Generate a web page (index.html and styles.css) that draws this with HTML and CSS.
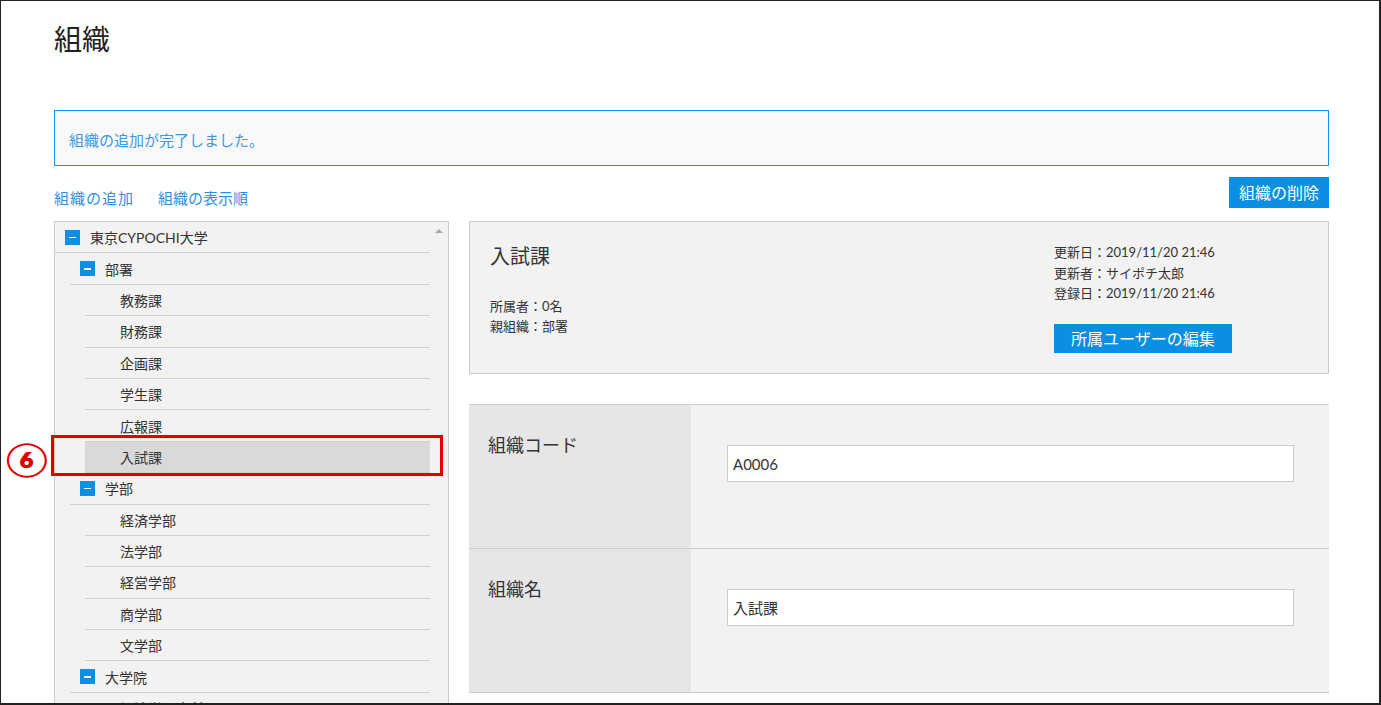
FILE: index.html
```html
<!DOCTYPE html>
<html lang="ja">
<head>
<meta charset="utf-8">
<title>組織</title>
<link rel="stylesheet" href="styles.css">
</head>
<body>
<div class="frame">
  <h1 class="page-title">組織</h1>

  <div class="alert">組織の追加が完了しました。</div>

  <div class="toolbar">
    <div class="links">
      <a class="link">組織の追加</a>
      <a class="link link-second">組織の表示順</a>
    </div>
    <button class="btn btn-delete">組織の削除</button>
  </div>

  <div class="main">
    <div class="tree">
      <div class="tree-list">
        <div class="row lv0"><span class="toggle"></span>東京CYPOCHI大学</div>
        <div class="row lv1"><span class="toggle"></span>部署</div>
        <div class="row lv2 leaf">教務課</div>
        <div class="row lv2 leaf">財務課</div>
        <div class="row lv2 leaf">企画課</div>
        <div class="row lv2 leaf">学生課</div>
        <div class="row lv2 leaf">広報課</div>
        <div class="row lv2 leaf selected">入試課</div>
        <div class="row lv1"><span class="toggle"></span>学部</div>
        <div class="row lv2 leaf">経済学部</div>
        <div class="row lv2 leaf">法学部</div>
        <div class="row lv2 leaf">経営学部</div>
        <div class="row lv2 leaf">商学部</div>
        <div class="row lv2 leaf">文学部</div>
        <div class="row lv1"><span class="toggle"></span>大学院</div>
        <div class="row lv2 leaf">経済学研究科</div>
      </div>
      <div class="tree-scrollbar"><span class="scroll-up"></span></div>
    </div>

    <div class="detail">
      <div class="info">
        <div class="info-left">
          <div class="info-name">入試課</div>
          <div class="info-meta">
            <div>所属者：0名</div>
            <div>親組織：部署</div>
          </div>
        </div>
        <div class="info-right">
          <div class="info-dates">
            <div>更新日：2019/11/20 21:46</div>
            <div>更新者：サイポチ太郎</div>
            <div>登録日：2019/11/20 21:46</div>
          </div>
          <button class="btn btn-members">所属ユーザーの編集</button>
        </div>
      </div>

      <div class="form">
        <div class="form-row">
          <div class="form-label">組織コード</div>
          <div class="form-value"><input class="input" type="text" value="A0006"></div>
        </div>
        <div class="form-row">
          <div class="form-label">組織名</div>
          <div class="form-value"><input class="input" type="text" value="入試課"></div>
        </div>
      </div>
    </div>
  </div>

  <div class="mark-box"></div>
  <div class="mark-num">⑥</div>
</div>
</body>
</html>
```

FILE: styles.css
```css
html, body {
  margin: 0;
  padding: 0;
  background: #fff;
}

body {
  font-family: "Lato", "Noto Sans CJK JP", sans-serif;
  color: #333;
}

.frame {
  position: relative;
  box-sizing: border-box;
  width: 1381px;
  height: 705px;
  border: 2px solid #222;
  border-top-width: 1px;
  border-left-width: 1px;
  padding: 18px 50px 0 53px;
  overflow: hidden;
}

.page-title {
  margin: 0;
  font-size: 28px;
  line-height: 40px;
  font-weight: normal;
  color: #222;
}

.alert {
  margin-top: 51px;
  box-sizing: border-box;
  height: 56px;
  border: 1px solid #1a90e6;
  background: #f9f9f9;
  display: flex;
  align-items: center;
  padding-left: 14px;
  padding-top: 2px;
  font-size: 15px;
  color: #3b98e2;
}

.toolbar {
  margin-top: 11px;
  height: 31px;
  display: flex;
  justify-content: space-between;
  align-items: flex-end;
}

.links {
  display: flex;
  font-size: 15px;
  line-height: 20px;
}

.link {
  color: #2f90dc;
  cursor: pointer;
}

.link:first-child {
  letter-spacing: 1px;
}

.link-second {
  margin-left: 24px;
}

.btn {
  border: none;
  background: #0b8fe3;
  color: #fff;
  font-family: inherit;
  font-size: 16px;
  padding: 0;
  cursor: pointer;
}

.btn-delete {
  height: 31px;
  line-height: 31px;
  padding: 0 10px;
  align-self: flex-start;
}

.main {
  margin-top: 13px;
  display: flex;
  gap: 20px;
  align-items: flex-start;
}

/* tree */
.tree {
  box-sizing: border-box;
  width: 395px;
  height: 520px;
  flex: none;
  border: 1px solid #ccc;
  background: #f2f2f2;
  display: flex;
}

.tree-list {
  flex: 1;
}

.tree-scrollbar {
  width: 18px;
  display: flex;
  justify-content: center;
}

.scroll-up {
  margin-top: 7px;
  width: 0;
  height: 0;
  border-left: 4px solid transparent;
  border-right: 4px solid transparent;
  border-bottom: 4px solid #a8a8a8;
}

.row {
  box-sizing: border-box;
  height: 31.4px;
  border-bottom: 1px solid #cfcfcf;
  display: flex;
  align-items: center;
  padding-left: 10px;
  font-size: 14px;
  color: #333;
}

.row.lv1 { margin-left: 15px; }
.row.lv2 { margin-left: 30px; }
.row.leaf { padding-left: 35px; }

.row.selected {
  background: #d9d9d9;
}

.toggle {
  position: relative;
  width: 15px;
  height: 15px;
  background: #0b8fe3;
  margin-right: 10px;
  flex: none;
}

.toggle::after {
  content: "";
  position: absolute;
  left: 4px;
  top: 7px;
  width: 7px;
  height: 1.5px;
  background: #fff;
}

/* detail */
.detail {
  flex: 1;
}

.info {
  box-sizing: border-box;
  height: 153px;
  border: 1px solid #ccc;
  background: #f2f2f2;
  display: flex;
  padding: 20px 0 0 20px;
}

.info-left {
  flex: 1;
}

.info-name {
  font-size: 20px;
  line-height: 28px;
  color: #333;
}

.info-meta {
  margin-top: 26px;
  font-size: 13px;
  line-height: 20px;
}

.info-right {
  width: 274px;
}

.info-dates {
  font-size: 13px;
  line-height: 20.5px;
}

.btn-members {
  margin-top: 20px;
  height: 29px;
  line-height: 29px;
  padding: 0 17px;
  display: block;
}

.form {
  margin-top: 30px;
  border-bottom: 1px solid #ccc;
}

.form-row {
  display: grid;
  grid-template-columns: 222px 1fr;
  height: 144px;
  box-sizing: border-box;
  border-top: 1px solid #ccc;
}

.form-label {
  background: #e6e6e6;
  padding: 27px 0 0 19px;
  font-size: 18px;
  line-height: 26px;
  color: #333;
}

.form-value {
  background: #f2f2f2;
  padding: 40px 35px 0 36px;
}

.input {
  display: block;
  box-sizing: border-box;
  width: 100%;
  height: 37px;
  border: 1px solid #ccc;
  background: #fff;
  padding: 0 5px;
  margin: 0;
  font-family: inherit;
  font-size: 15px;
  color: #333;
  outline: none;
}

/* annotation */
.mark-box {
  position: absolute;
  left: 50px;
  top: 434px;
  width: 392px;
  height: 41px;
  box-sizing: border-box;
  border: 3px solid #e00000;
}

.mark-num {
  position: absolute;
  left: 5px;
  top: 436px;
  width: 42px;
  height: 42px;
  display: flex;
  align-items: center;
  justify-content: center;
  font-size: 36px;
  line-height: 42px;
  font-weight: bold;
  color: #e00000;
  transform: scale(1.05, 0.9);
}
```
